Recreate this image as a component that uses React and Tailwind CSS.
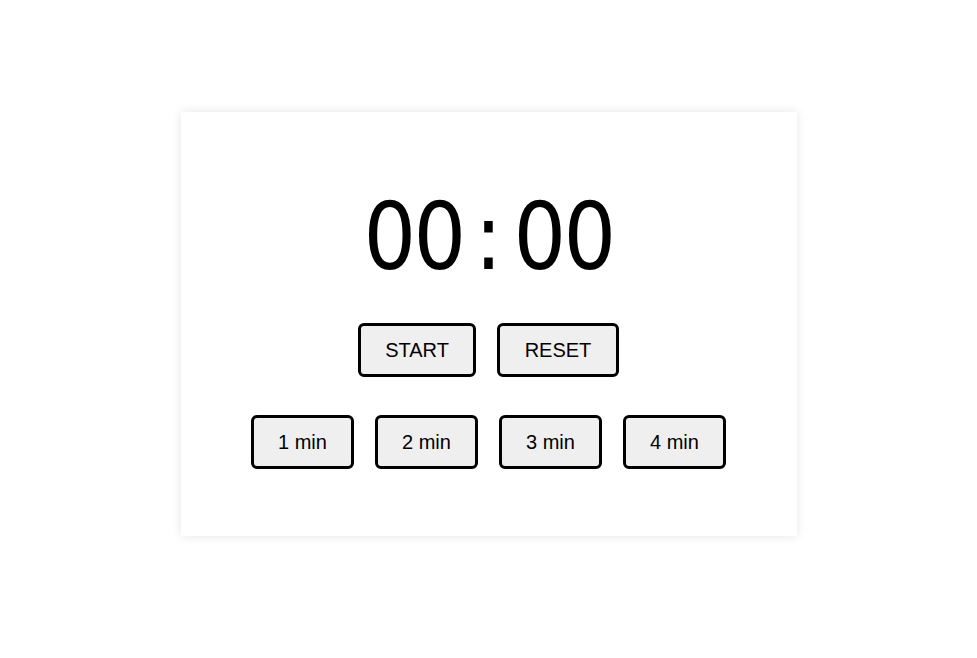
import React, { useState, useEffect, useRef } from 'react';

const pad = (n) => String(n).padStart(2, '0');

const App = () => {
  const [seconds, setSeconds] = useState(0);
  const [running, setRunning] = useState(false);
  const timer = useRef(null);

  useEffect(() => {
    if (!running) return;
    timer.current = setInterval(() => {
      setSeconds((s) => {
        if (s <= 1) {
          setRunning(false);
          return 0;
        }
        return s - 1;
      });
    }, 1000);
    return () => clearInterval(timer.current);
  }, [running]);

  const display = `${pad(Math.floor(seconds / 60))}:${pad(seconds % 60)}`;

  const btn =
    'py-3 text-[20px] leading-6 text-center text-black bg-[#efefef] border-[3px] border-black rounded-md';

  return (
    <div className="min-h-screen bg-white flex justify-center pt-[112px] font-['Liberation_Sans',Arial,sans-serif]">
      <div className="w-[616px] h-[424px] bg-white shadow-[0_0_10px_rgba(0,0,0,0.1)] flex flex-col items-center pt-[80px]">
        {/* fixed-width cells so the digits don't jump while counting */}
        <div className="flex text-[92px] leading-none text-black font-['DejaVu_Sans_Condensed','DejaVu_Sans',sans-serif]">
          {display.split('').map((ch, i) => (
            <span key={i} className="w-[50px] text-center">
              {ch}
            </span>
          ))}
        </div>

        <div className="flex gap-[21px] mt-[39px]">
          <button className={btn + ' w-[118px]'} onClick={() => setRunning(!running)}>
            {running ? 'STOP' : 'START'}
          </button>
          <button
            className={btn + ' w-[122px]'}
            onClick={() => {
              setRunning(false);
              setSeconds(0);
            }}
          >
            RESET
          </button>
        </div>

        <div className="flex gap-[21px] mt-[38px]">
          {[1, 2, 3, 4].map((m) => (
            <button key={m} className={btn + ' w-[103px]'} onClick={() => setSeconds(m * 60)}>
              {m} min
            </button>
          ))}
        </div>
      </div>
    </div>
  );
};

export default App;
